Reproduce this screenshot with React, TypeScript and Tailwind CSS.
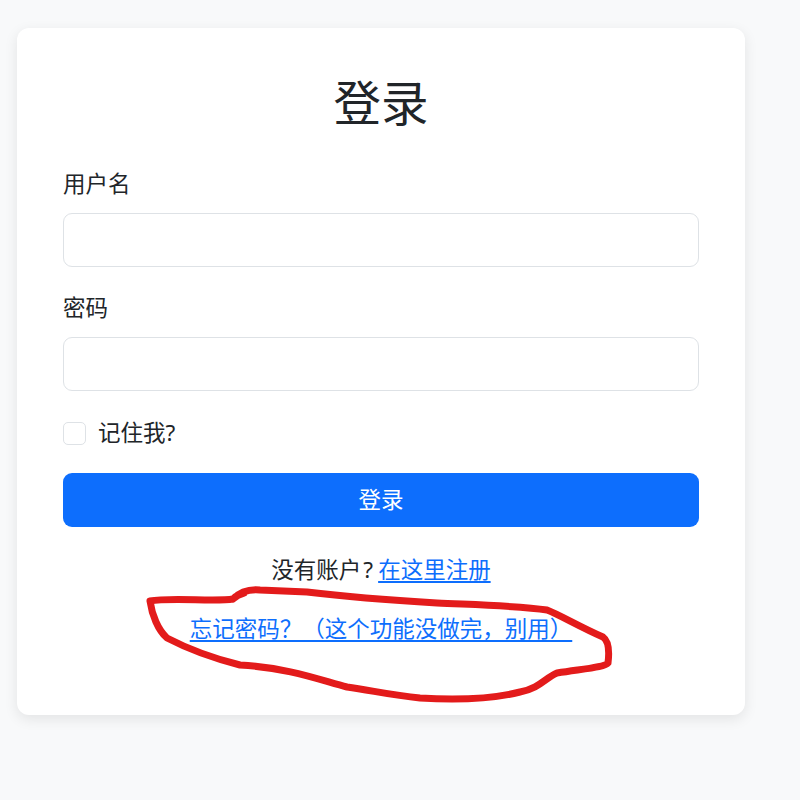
import React from "react";

export default function App() {
  const font = { fontFamily: '"Noto Sans", "Noto Sans CJK SC", sans-serif' };
  return (
    <div
      className="relative min-h-[800px] w-[800px] bg-[#f8f9fa] pl-[17px] pt-[28px] text-[#212529]"
      style={font}
    >
      <div className="w-[728px] rounded-[12px] bg-white px-[46px] pt-[46px] pb-[69px] shadow-[0_4px_14px_rgba(0,0,0,0.09)]">
        <h1 className="text-center text-[47.5px] font-normal leading-[1.2]">登录</h1>

        <label className="mt-[36px] block text-[22.5px] leading-[34px]">用户名</label>
        <input
          type="text"
          className="mt-[12px] block h-[54px] w-full rounded-[9px] border border-[#dee2e6] bg-white px-4 outline-none"
        />

        <label className="mt-[24px] block text-[22.5px] leading-[34px]">密码</label>
        <input
          type="password"
          className="mt-[12px] block h-[54px] w-full rounded-[9px] border border-[#dee2e6] bg-white px-4 outline-none"
        />

        <div className="mt-[25px] flex h-[34px] items-center">
          <span className="block h-[23px] w-[23px] rounded-[5px] border border-[#dee2e6] bg-white" />
          <span className="ml-[12px] text-[22.5px] leading-[34px]">记住我?</span>
        </div>

        <button className="mt-[23px] flex h-[54px] w-full items-center justify-center rounded-[9px] bg-[#0d6efd] text-[22.5px] text-white">
          登录
        </button>

        <p className="mt-[26px] text-center text-[22.5px] leading-[34px]">
          没有账户<span className="ml-[2px] mr-[5px] inline-block text-left">?</span>
          <a className="text-[#0d6efd] underline underline-offset-[3px]" href="#">
            在这里注册
          </a>
        </p>

        <p className="mt-[25px] text-center text-[22.5px] leading-[34px]">
          <a className="text-[#0d6efd] underline underline-offset-[3px]" href="#">
            忘记密码？（这个功能没做完，别用）
          </a>
        </p>
      </div>

      <svg
        className="pointer-events-none absolute left-0 top-0"
        width="800"
        height="800"
        viewBox="0 0 800 800"
      >
        <path
          d="M233,599 C240,592 250,589 260,590 L307,592 C340,596 370,599 437,603 C480,605 520,606 547,610 C560,615 580,627 603,637 C610,642 609,655 608,663 C605,667 590,668 557,673 C545,678 540,688 520,692 C500,697 470,701 420,698 C390,695 370,690 347,687 C320,680 290,668 240,665 C220,660 190,650 167,638 C158,630 152,615 150,601 C170,597 215,602 233,599 C236,596 240,594 244,593"
          fill="none"
          stroke="#e31b1b"
          strokeWidth="7"
          strokeLinecap="round"
          strokeLinejoin="round"
        />
      </svg>
    </div>
  );
}
